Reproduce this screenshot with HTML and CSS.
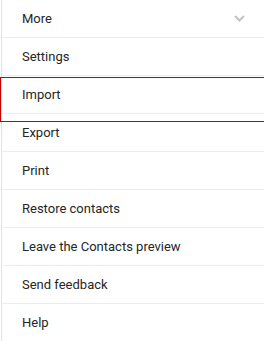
FILE: index.html
```html
<!DOCTYPE html>
<html>
<head>
<meta charset="utf-8">
<link rel="stylesheet" href="styles.css">
</head>
<body>
<div class="menu">
  <div class="item">
    <span>More</span>
    <svg class="chev" width="11" height="7" viewBox="0 0 11 7"><path d="M1 1 L5.5 5.5 L10 1" fill="none" stroke="#c2c2c2" stroke-width="2"/></svg>
  </div>
  <div class="item">Settings</div>
  <div class="item hl">Import<div class="mark"></div></div>
  <div class="item">Export</div>
  <div class="item">Print</div>
  <div class="item">Restore contacts</div>
  <div class="item">Leave the Contacts preview</div>
  <div class="item">Send feedback</div>
  <div class="item">Help</div>
</div>
</body>
</html>
```
FILE: styles.css
```css
html, body { margin: 0; padding: 0; background: #fff; }
body { font-family: Roboto, "Liberation Sans", Arial, sans-serif; }
.menu {
  margin-left: 1px;
  border-left: 1px solid #e2e2e2;
  width: 262px;
}
.item {
  position: relative;
  height: 37px;
  border-bottom: 1px solid #ececec;
  display: flex;
  align-items: center;
  justify-content: space-between;
  padding-left: 20px;
  padding-right: 19px;
  font-size: 13px;
  color: #262626;
}
.chev { display: block; }
.mark {
  position: absolute;
  left: -2px;
  right: -1px;
  top: 1px;
  height: 45px;
  border: 1px solid #c80000;
  box-sizing: border-box;
}
```
